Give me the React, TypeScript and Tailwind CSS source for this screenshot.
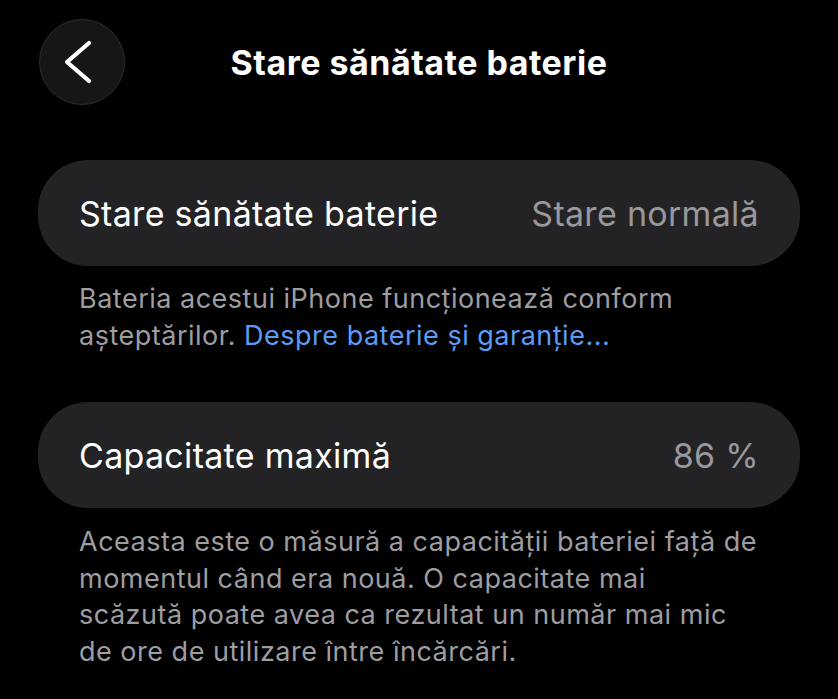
function BackIcon(props: any) {
  return (
    <svg {...props} viewBox="0 0 86 86" fill="none" stroke="currentColor" strokeWidth="4.2" strokeLinecap="round" strokeLinejoin="round">
      <polyline points="50,24 28,43 50,62" />
    </svg>
  );
}

export default function App() {
  return (
    <div className="min-h-screen w-full bg-black font-['Inter',sans-serif] text-white antialiased">
      {/* header */}
      <div className="relative flex h-[124px] items-center justify-center">
        <button className="absolute left-[39px] top-[19px] flex h-[86px] w-[86px] items-center justify-center rounded-full border border-[#2c2c2e] bg-[#161617]">
          <BackIcon className="h-[86px] w-[86px] shrink-0" />
        </button>
        <h1 className="text-[34px] font-bold tracking-[0.5px]">Stare sănătate baterie</h1>
      </div>

      <div className="px-[38px] pt-[36px]">
        <div className="flex h-[106px] items-center justify-between rounded-[50px] bg-[#232325] px-[41px] text-[34px] tracking-[0.3px]">
          <span>Stare sănătate baterie</span>
          <span className="text-[#98989d]">Stare normală</span>
        </div>
        <p className="px-[41px] pt-[14px] text-[27px] leading-[37px] text-[#9d9da2] tracking-[0.5px] whitespace-nowrap">
          Bateria acestui iPhone funcționează conform
          <br />
          așteptărilor. <span className="text-[#5b9cf6]">Despre baterie și garanție...</span>
        </p>

        <div className="mt-[48px] flex h-[106px] items-center justify-between rounded-[50px] bg-[#232325] px-[41px] text-[34px] tracking-[0.3px]">
          <span>Capacitate maximă</span>
          <span className="text-[#98989d]">86 %</span>
        </div>
        <p className="px-[41px] pt-[16px] text-[27px] leading-[36.5px] text-[#9d9da2] tracking-[0.5px] whitespace-nowrap">
          Aceasta este o măsură a capacității bateriei față de
          <br />
          momentul când era nouă. O capacitate mai
          <br />
          scăzută poate avea ca rezultat un număr mai mic
          <br />
          de ore de utilizare între încărcări.
        </p>
      </div>
    </div>
  );
}
